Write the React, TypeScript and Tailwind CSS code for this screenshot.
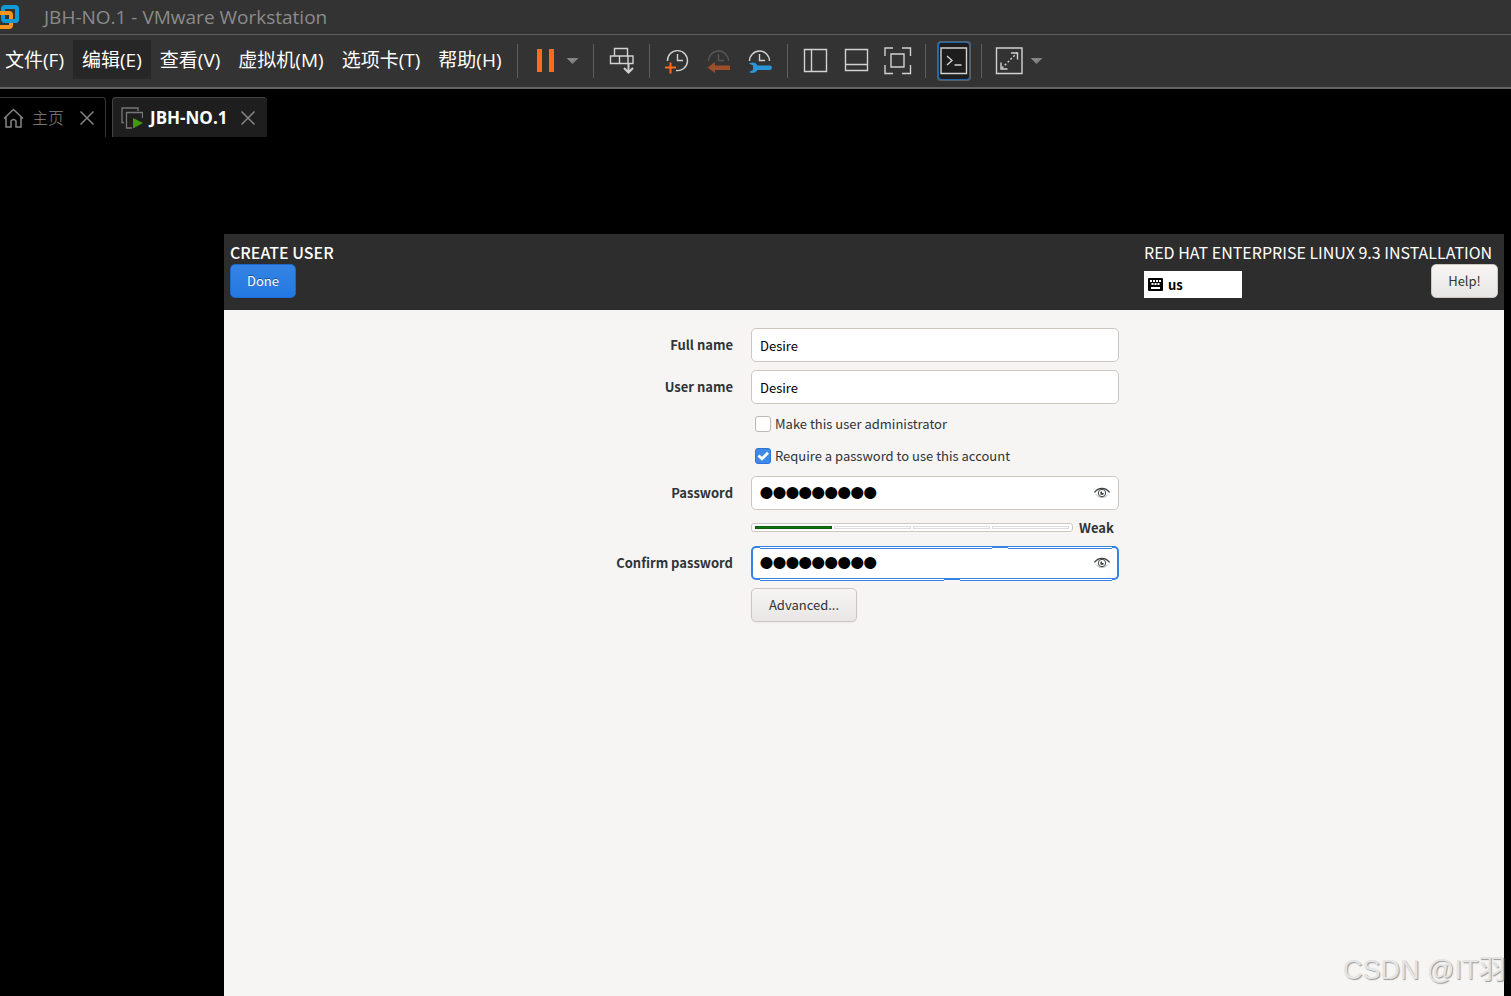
import {useState, type ReactNode} from 'react'

const UI_FONT = "font-['Open_Sans','Noto_Sans_CJK_SC',sans-serif]"
const GUEST_FONT = "font-['Noto_Sans_CJK_SC',sans-serif]"

const MENU_ITEMS = ['文件(F)', '编辑(E)', '查看(V)', '虚拟机(M)', '选项卡(T)', '帮助(H)']
const OPEN_MENU = '编辑(E)'

export default function App() {
  return (
    <div className={'flex min-h-screen flex-col overflow-hidden bg-black ' + UI_FONT}>
      <TitleBar />
      <MenuBar />
      <TabStrip />
      <CreateUserScreen />
    </div>
  )
}

function TitleBar() {
  return (
    <header className="flex h-[35px] shrink-0 items-center border-b border-[#5e5e5e] bg-[#333333]">
      <VmwareLogo />
      <h1 className="ml-6 text-[19px] leading-6 text-[#8b8b8b]">JBH-NO.1 - VMware Workstation</h1>
    </header>
  )
}

function MenuBar() {
  return (
    <div className="flex h-[54px] shrink-0 items-center border-b-2 border-[#636363] bg-[#333333]">
      <nav className="-ml-1 flex w-[521px] shrink-0 pb-[3px]" aria-label="Menu">
        {MENU_ITEMS.map((item) => (
          <button
            key={item}
            type="button"
            className={
              (item === OPEN_MENU ? 'bg-[#272727] ' : '') +
              'h-[39px] px-[9px] text-[19px] leading-6 whitespace-nowrap text-white'
            }
          >
            {item}
          </button>
        ))}
      </nav>

      <ToolGroup className="pr-[14px] pl-[18px]">
        <ToolButton label="Suspend">
          <svg width="20" height="28" viewBox="0 0 20 28" fill="#ff6a1c" aria-hidden="true">
            <path d="M1 2h5v23H1zM13 2h5v23h-5z" />
          </svg>
        </ToolButton>
        <ToolButton label="Power options" className="ml-[10px]">
          <Caret />
        </ToolButton>
      </ToolGroup>

      <ToolGroup className="pr-[13px] pl-[14px]">
        <ToolButton label="Send Ctrl+Alt+Del">
          <Glyph>
            <path d="M6.500 9V1.500h13V9M2.500 9h22.500v7.500H2.500zM11.500 9v7.500M20 9v7.500" />
            <path d="M20.500 16v9M16 21l4.500 4.500 4.500-4.500" strokeWidth="2" />
          </Glyph>
        </ToolButton>
      </ToolGroup>

      <ToolGroup className="gap-[13px] pr-[13px] pl-[14px]">
        <ToolButton label="Take snapshot">
          <Glyph>
            <path d="M3.500 14A10 10 0 1 1 12 23.500M13.500 7v6.500H19" />
            <path d="M6.500 15.500v11M1 20.500h11" stroke="#ff6a1c" strokeWidth="2" />
          </Glyph>
        </ToolButton>
        <ToolButton label="Revert to snapshot">
          <Glyph>
            <path d="M3.500 14a10 10 0 0 1 20 0M13.500 7v6.500H19" stroke="#555555" />
            <path d="M2.500 20.500 10 15v3.500h15v4.500H10v3z" fill="#9c5029" stroke="none" />
          </Glyph>
        </ToolButton>
        <ToolButton label="Manage snapshots">
          <Glyph>
            <path d="M3.500 14a10 10 0 0 1 20 0M13.500 7v6.500H19" />
            <path
              d="M3 16.500c3-2 7.500-1 8.500 2H24c2.500 0 2.500 4.500 0 4.500H11.500c-1.500 3-6 4-8.500 2l4-2v-4.500z"
              fill="#2b95d6"
              stroke="none"
            />
          </Glyph>
        </ToolButton>
      </ToolGroup>

      <ToolGroup className="gap-[13px] pr-[13px] pl-[14px]">
        <ToolButton label="Show library">
          <Glyph>
            <path d="M2.500 2.500h22v22h-22zM9.500 2.500v22" />
          </Glyph>
        </ToolButton>
        <ToolButton label="Show thumbnail bar">
          <Glyph>
            <path d="M2.500 2.500h22v21h-22zM2.500 17.500h22" />
          </Glyph>
        </ToolButton>
        <ToolButton label="Full screen">
          <Glyph>
            <path d="M7 7h13v13H7z" />
            <path d="M1 9V1h8M18 1h8.500v8M26.500 18v8.500H18M9 26.500H1V18" />
          </Glyph>
        </ToolButton>
      </ToolGroup>

      <ToolGroup className="pr-[10px] pl-[11px]">
        <ToolButton
          label="Console view"
          className="flex h-10 w-[34px] items-center justify-center rounded-sm border-2 border-[#56616a] bg-[#1d1d1d] outline-1 -outline-offset-2 outline-[#1c6aad]"
        >
          <Glyph>
            <path d="M1 1h25.500v25.500H1z" />
            <path d="m7 9 5 4.500-5 4.500M14.500 18h7" />
          </Glyph>
        </ToolButton>
      </ToolGroup>

      <ToolGroup className="pl-[13px]">
        <ToolButton label="Stretch guest">
          <Glyph>
            <path d="M1.500 1h25.500v25.500H1.500z" />
            <path d="M16 6h6.500v6.500M6 15.500V22h6.500" />
            <path d="m7 21 15-15" strokeDasharray="2 2" />
          </Glyph>
        </ToolButton>
        <ToolButton label="Stretch options" className="ml-[7px]">
          <Caret />
        </ToolButton>
      </ToolGroup>
    </div>
  )
}

function ToolGroup({className, children}: {className: string; children: ReactNode}) {
  return (
    <div className={'flex h-[34px] shrink-0 items-center border-l border-[#5e5e5e] ' + className}>{children}</div>
  )
}

function ToolButton({label, className = '', children}: {label: string; className?: string; children: ReactNode}) {
  return (
    <button type="button" aria-label={label} className={'shrink-0 ' + className}>
      {children}
    </button>
  )
}

function Glyph({children}: {children: ReactNode}) {
  return (
    <svg
      width="28"
      height="28"
      viewBox="0 0 28 28"
      fill="none"
      stroke="#d2d2d2"
      strokeWidth="1.4"
      className="block shrink-0"
      aria-hidden="true"
    >
      {children}
    </svg>
  )
}

function Caret() {
  return (
    <svg width="13" height="6" viewBox="0 0 13 6" fill="#858585" aria-hidden="true">
      <path d="M.5 0h12l-6 6z" />
    </svg>
  )
}

function TabStrip() {
  return (
    <div className="flex h-[48px] shrink-0 items-end gap-[6px]">
      <div className="flex h-10 w-[106px] items-center rounded-tr border-t border-r border-[#363636] pl-[3px]">
        <svg width="21" height="20" viewBox="0 0 21 20" fill="none" stroke="#858585" strokeWidth="1.5" aria-hidden="true">
          <path d="M1 10.500 10.500 1.500 20 10.500M3 9v10h5v-6q2.500-3 5 0v6h5V9" />
        </svg>
        <span className="ml-2 text-base leading-6 font-light text-[#858585]">主页</span>
        <CloseButton label="Close home tab" className="ml-4" />
      </div>
      <div className="flex h-10 w-[155px] items-center rounded-t border-t border-l border-[#444444] bg-[#1e1e1e] pl-2">
        <svg width="22" height="22" viewBox="0 0 22 22" fill="none" stroke="#777777" strokeWidth="1.3" aria-hidden="true">
          <path d="M3 15.500H1V1h16v3" />
          <path d="M11 21H5.500V5.500h16V11" />
          <path d="m12 11 10 5-10 5.500z" fill="#44980f" stroke="none" />
        </svg>
        <span className="ml-[7px] text-[17px] leading-6 font-bold text-white">JBH-NO.1</span>
        <CloseButton label="Close JBH-NO.1" className="ml-[14px]" />
      </div>
    </div>
  )
}

function CloseButton({label, className}: {label: string; className: string}) {
  return (
    <button type="button" aria-label={label} className={'shrink-0 ' + className}>
      <svg width="14" height="14" viewBox="0 0 14 14" stroke="#858585" strokeWidth="1.5" aria-hidden="true">
        <path d="m.5.5 13 13M13.500.5l-13 13" />
      </svg>
    </button>
  )
}

function CreateUserScreen() {
  const [fullName, setFullName] = useState('Desire')
  const [userName, setUserName] = useState('Desire')
  return (
    <main
      className={
        'relative mt-[97px] mr-[7px] ml-[224px] flex-1 bg-[#f6f5f4] text-[13px] leading-5 text-[#2e3436] ' + GUEST_FONT
      }
    >
      <div className="flex h-[76px] justify-between bg-[#2d2d2d] px-[6px] pt-[6px] text-white">
        <div>
          <h2 className="text-base leading-6 font-medium">CREATE USER</h2>
          <button
            type="button"
            className="h-[34px] w-[66px] rounded-[5px] border border-[#1b6acb] bg-linear-to-b from-[#3584e4] to-[#2379e2] text-shadow-[0_-1px_#184f95]"
          >
            Done
          </button>
        </div>
        <div className="min-w-[354px]">
          <div className="text-base leading-6">RED HAT ENTERPRISE LINUX 9.3 INSTALLATION</div>
          <div className="flex items-end justify-between">
            <div className="flex h-[27px] w-[98px] items-center gap-1 bg-white pl-1 font-bold text-black">
              <KeyboardIcon />
              us
            </div>
            <button
              type="button"
              className="h-[34px] w-[67px] rounded-[5px] border border-[#cdc7c2] bg-linear-to-b from-[#f6f5f4] to-[#e8e7e5] text-[#2e3436]"
            >
              Help!
            </button>
          </div>
        </div>
      </div>

      <form className="mx-auto grid w-[510px] grid-cols-[124px_368px] items-center gap-x-[18px] gap-y-2 pt-[18px]">
        <FieldLabel htmlFor="full-name">Full name</FieldLabel>
        <TextField id="full-name" value={fullName} onChange={setFullName} />
        <FieldLabel htmlFor="user-name">User name</FieldLabel>
        <TextField id="user-name" value={userName} onChange={setUserName} />

        <CheckRow label="Make this user administrator" />
        <CheckRow label="Require a password to use this account" defaultChecked />

        <FieldLabel htmlFor="password">Password</FieldLabel>
        <PasswordField id="password" />
        <StrengthRow filled={1} label="Weak" />
        <FieldLabel htmlFor="confirm">Confirm password</FieldLabel>
        <PasswordField id="confirm" focused />

        <button
          type="button"
          className="col-start-2 h-[34px] w-[106px] rounded-[5px] border border-[#cdc7c2] bg-linear-to-b from-[#f6f5f4] to-[#e8e7e5] shadow-xs"
        >
          Advanced...
        </button>
      </form>

      <div
        className="absolute right-0 bottom-2 w-[161px] font-['Liberation_Sans','Noto_Sans_CJK_SC',sans-serif] text-[27px] leading-9 whitespace-nowrap text-[#e4e4e4] text-shadow-[1px_1px_1px_#999999]"
      >
        CSDN @IT羽
      </div>
    </main>
  )
}

function FieldLabel({htmlFor, children}: {htmlFor: string; children: ReactNode}) {
  return (
    <label htmlFor={htmlFor} className="text-right font-bold whitespace-nowrap">
      {children}
    </label>
  )
}

function TextField({id, value, onChange}: {id: string; value: string; onChange: (value: string) => void}) {
  return (
    <input
      id={id}
      type="text"
      value={value}
      onChange={(e) => onChange(e.target.value)}
      className="h-[34px] w-full rounded-[5px] border border-[#cdc7c2] bg-white px-2 text-black outline-none"
    />
  )
}

function CheckRow({label, defaultChecked = false}: {label: string; defaultChecked?: boolean}) {
  return (
    <label className="col-start-2 flex h-6 items-center gap-1 pl-1">
      <span className="grid h-4 w-4 shrink-0">
        <input
          type="checkbox"
          defaultChecked={defaultChecked}
          className="peer col-start-1 row-start-1 h-4 w-4 appearance-none rounded-[3px] border border-[#bfb8b1] bg-white checked:border-[#2b76d4] checked:bg-[#3d8ae8]"
        />
        <svg
          viewBox="0 0 16 16"
          className="pointer-events-none invisible col-start-1 row-start-1 h-4 w-4 peer-checked:visible"
          fill="none"
          stroke="white"
          strokeWidth="2.8"
          aria-hidden="true"
        >
          <path d="m3.500 7.500 3.500 3.300 6-6" />
        </svg>
      </span>
      {label}
    </label>
  )
}

function PasswordField({id, focused = false}: {id: string; focused?: boolean}) {
  return (
    <div
      className={
        (focused ? 'border-2 border-[#3584e4] px-[7px]' : 'border border-[#cdc7c2] px-2') +
        ' relative flex h-[34px] items-center rounded-[5px] bg-white'
      }
    >
      {focused && <FocusLines />}
      <input
        id={id}
        type="password"
        defaultValue="desire123"
        className="h-7 min-w-0 flex-1 bg-transparent font-['Liberation_Sans',sans-serif] text-[37px] leading-7 text-black outline-none [-webkit-text-stroke:2px_black]"
      />
      <button type="button" aria-label="Show password">
        <EyeIcon />
      </button>
    </div>
  )
}

// Doubled stretches of the focus ring, broken once along each edge
function FocusLines() {
  const line = 'pointer-events-none absolute h-[3px] border-y border-[#3584e4] bg-white '
  return (
    <>
      <span className={line + '-top-[2px] left-[7px] w-[232px]'} />
      <span className={line + '-top-[2px] right-[5px] w-[104px]'} />
      <span className={line + '-bottom-[3px] left-[7px] w-[184px]'} />
      <span className={line + 'right-[5px] -bottom-[3px] w-[152px]'} />
    </>
  )
}

function StrengthRow({filled, label}: {filled: number; label: string}) {
  return (
    <div className="col-start-2 flex h-5 items-center gap-[6px] pb-px">
      <div
        role="meter"
        aria-label="Password strength"
        aria-valuemin={0}
        aria-valuemax={4}
        aria-valuenow={filled}
        className="flex h-[9px] w-[322px] items-center gap-[2px] rounded-[3px] border border-[#cdc7c2] bg-white px-[3px]"
      >
        {[0, 1, 2, 3].map((i) => (
          <span
            key={i}
            className={(i < filled ? 'border-[#0f5a10] bg-[#0b7a0b]' : 'border-[#dcdcdc] bg-white') + ' h-[3px] flex-1 border'}
          />
        ))}
      </div>
      <span className="font-bold">{label}</span>
    </div>
  )
}

function EyeIcon() {
  return (
    <svg width="16" height="16" viewBox="0 0 16 16" fill="none" stroke="#3d4244" className="block" aria-hidden="true">
      <path d="M.5 7.500C2.500 4.500 5 3.300 8 3.300s5.500 1.200 7.500 4.200" strokeWidth="1.3" />
      <circle cx="8" cy="8" r="3.7" />
      <path d="M8 6.300A1.800 1.800 0 1 0 9.800 8H8z" fill="#3d4244" stroke="none" />
      <path d="M2 9.500c1.500 2 3.500 3 6 3s4.500-1 6-3" strokeWidth=".6" strokeOpacity=".6" />
    </svg>
  )
}

function KeyboardIcon() {
  return (
    <svg width="16" height="13" viewBox="0 0 16 13" aria-hidden="true">
      <rect width="15" height="13" rx="1" fill="black" />
      <path
        d="M2 2h2v2H2zM5 2h2v2H5zM8 2h2v2H8zM11 2h2v2h-2zM3.500 5h2v2h-2zM6.500 5h2v2h-2zM9.500 5h2v2h-2zM3 9h9v2H3z"
        fill="white"
      />
    </svg>
  )
}

function VmwareLogo() {
  return (
    <svg width="20" height="26" viewBox="0 0 20 26" fill="none" strokeWidth="4" className="shrink-0" aria-hidden="true">
      <rect x="3" y="3" width="14" height="14" rx="2" stroke="#0f9bd7" />
      <rect x="-3" y="9" width="14" height="14" rx="2" stroke="#f7941e" />
      <path d="M7 17h8q2 0 2-2" stroke="#0f9bd7" />
    </svg>
  )
}
